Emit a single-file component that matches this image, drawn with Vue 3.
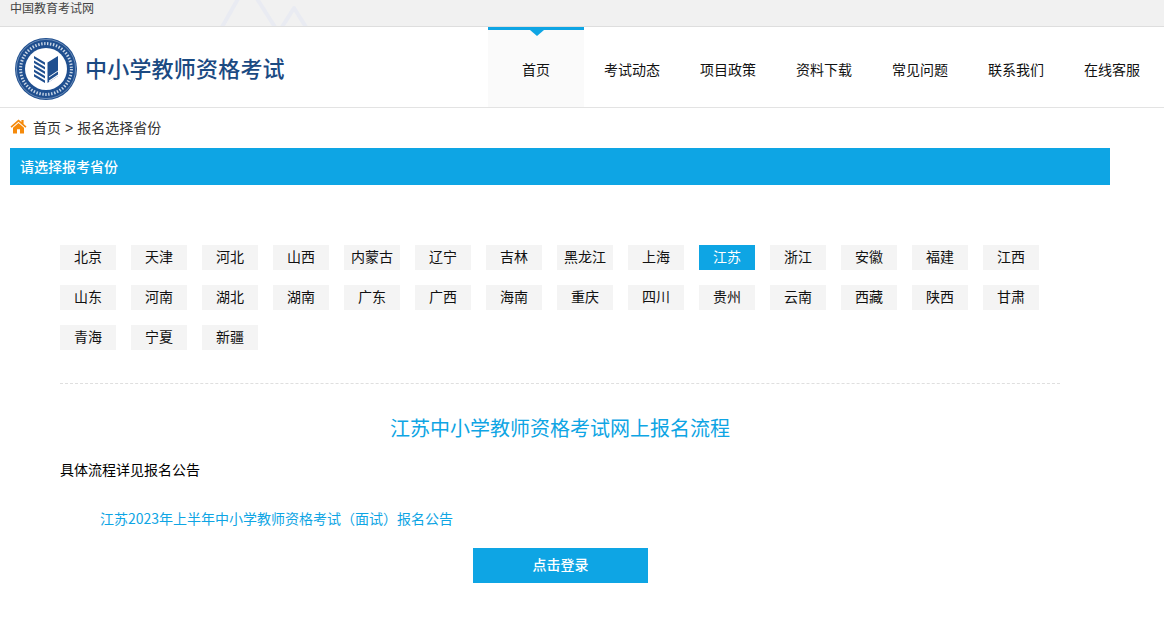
<template>
  <div class="page">
    <div class="top-bar">
      <span class="top-text">中国教育考试网</span>
      <svg class="mountains" width="120" height="26" viewBox="0 0 120 26">
        <path d="M2 27 L27 -17 L55 27 M62 27 L74 8 L86 27" fill="none" stroke="#e9ebf2" stroke-width="4" stroke-linejoin="round" />
      </svg>
    </div>

    <header class="site-header">
      <div class="brand">
        <svg class="logo" width="64" height="64" viewBox="0 0 64 64">
          <circle cx="32" cy="32" r="31" fill="#1f4f8f" />
          <circle cx="32" cy="32" r="29.6" fill="none" stroke="#9db4d2" stroke-width="0.6" />
          <circle cx="32" cy="32" r="25.4" fill="none" stroke="#c9d6e6" stroke-width="3" stroke-dasharray="1.4 1.6" />
          <circle cx="32" cy="32" r="21" fill="#fff" />
          <path d="M33.5 25.5 L44 19 V39 L33.5 46 Z" fill="#1f4f8f" />
          <path d="M31 25.5 L20 19 V21.6 L31 28.1 Z M31 30 L20 23.5 V26.1 L31 32.6 Z M31 34.5 L20 28 V30.6 L31 37.1 Z M31 39 L20 32.5 V35.1 L31 41.6 Z M31 43.5 L20 37 V39.6 L31 46.1 Z" fill="#1f4f8f" />
          <path d="M35 43.5 L44 37.6 V39 L35 45 Z M35 39.5 L44 33.6 V34.6 L35 40.5 Z" fill="#fff" />
        </svg>
        <h1 class="brand-name">中小学教师资格考试</h1>
      </div>
      <nav class="nav">
        <a v-for="(item, i) in navItems" :key="item" class="nav-item" :class="{ active: i === 0 }">{{ item }}</a>
      </nav>
    </header>

    <div class="crumbs">
      <svg class="home" width="17" height="15" viewBox="0 0 17 15">
        <path d="M8.5 0.5 L0.5 7.6 L1.6 8.8 L8.5 2.7 L15.4 8.8 L16.5 7.6 L13.6 5 V1 H11.4 V3 Z" fill="#f58a0b" />
        <path d="M8.5 4 L3 8.8 V14.5 H7 V10.2 H10 V14.5 H14 V8.8 Z" fill="#f58a0b" />
      </svg>
      <span>首页<i class="sep">&gt;</i>报名选择省份</span>
    </div>

    <div class="title-bar">请选择报考省份</div>

    <div class="content">
      <ul class="provinces">
        <li v-for="p in provinces" :key="p" class="province" :class="{ current: p === '江苏' }">{{ p }}</li>
      </ul>

      <h2 class="flow-title">江苏中小学教师资格考试网上报名流程</h2>
      <p class="flow-note">具体流程详见报名公告</p>
      <a class="notice-link">江苏2023年上半年中小学教师资格考试（面试）报名公告</a>
      <button class="login-btn">点击登录</button>
    </div>
  </div>
</template>

<script setup>
const navItems = ['首页', '考试动态', '项目政策', '资料下载', '常见问题', '联系我们', '在线客服']

const provinces = [
  '北京', '天津', '河北', '山西', '内蒙古', '辽宁', '吉林', '黑龙江', '上海', '江苏', '浙江', '安徽', '福建', '江西',
  '山东', '河南', '湖北', '湖南', '广东', '广西', '海南', '重庆', '四川', '贵州', '云南', '西藏', '陕西', '甘肃',
  '青海', '宁夏', '新疆'
]
</script>

<style>
html, body { margin: 0; padding: 0; background: #fff; }
</style>

<style scoped>
* { box-sizing: border-box; }

.page {
  width: 1164px;
  height: 619px;
  overflow: hidden;
  font-family: "Noto Sans CJK SC", "Liberation Sans", sans-serif;
  font-size: 14px;
  color: #333;
  background: #fff;
}

.top-bar {
  position: relative;
  height: 27px;
  padding-left: 10px;
  background: #f1f1f1;
  border-bottom: 1px solid #dedede;
  font-size: 12px;
  line-height: 15px;
  color: #444;
}
.mountains { position: absolute; left: 220px; top: 0; }

.site-header {
  display: flex;
  justify-content: space-between;
  height: 81px;
  border-bottom: 1px solid #e3e3e3;
}
.brand { display: flex; align-items: center; padding-left: 14px; }
.logo { margin-top: 3px; }
.brand-name {
  margin: 0 0 0 7px;
  font-size: 22px;
  font-weight: 500;
  letter-spacing: 0.2px;
  color: #1b4a82;
  white-space: nowrap;
}

.nav { display: flex; margin-right: 4px; }
.nav-item {
  position: relative;
  width: 96px;
  padding-top: 32px;
  text-align: center;
  font-size: 14px;
  line-height: 20px;
  color: #111;
}
.nav-item.active { background: #fafafa; border-top: 3px solid #0ea5e4; padding-top: 29px; }
.nav-item.active::after {
  content: "";
  position: absolute;
  left: 42px;
  top: 0;
  border-style: solid;
  border-width: 6px 7px 0;
  border-color: #0ea5e4 transparent transparent;
}

.crumbs {
  display: flex;
  align-items: center;
  gap: 6px;
  height: 40px;
  padding: 0 0 2px 10px;
  font-size: 14px;
  color: #333;
}
.sep { margin: 0 4px; font-style: normal; font-family: "Liberation Sans", sans-serif; }
.home { margin-top: -1px; }

.title-bar {
  width: 1100px;
  height: 37px;
  margin-left: 10px;
  padding-left: 10px;
  background: #0ea5e4;
  color: #fff;
  font-size: 14px;
  font-weight: 500;
  line-height: 36px;
}

.content { width: 1000px; margin-left: 60px; }

.provinces {
  display: flex;
  flex-wrap: wrap;
  column-gap: 15px;
  row-gap: 15px;
  height: 199px;
  margin: 0;
  padding: 60px 0 0;
  list-style: none;
  align-content: flex-start;
  border-bottom: 1px dashed #dfdfdf;
}
.province {
  width: 56px;
  height: 25px;
  background: #f4f4f4;
  color: #111;
  text-align: center;
  line-height: 23px;
  font-size: 14px;
  white-space: nowrap;
}
.province.current { background: #0ea5e4; color: #fff; }

.flow-title {
  margin: 30px 0 0;
  text-align: center;
  font-size: 20px;
  font-weight: 400;
  line-height: 28px;
  color: #0ea5e4;
}
.flow-note {
  margin: 17px 0 0;
  font-size: 14px;
  line-height: 20px;
  color: #000;
}
.notice-link {
  display: block;
  margin: 29px 0 0 40px;
  font-size: 14px;
  line-height: 20px;
  color: #0ea5e4;
}
.login-btn {
  display: block;
  width: 175px;
  height: 35px;
  margin: 20px 0 0 413px;
  padding: 0 0 3px;
  border: 0;
  background: #0ea5e4;
  color: #fff;
  font-family: inherit;
  font-size: 14px;
  font-weight: 500;
}
</style>
